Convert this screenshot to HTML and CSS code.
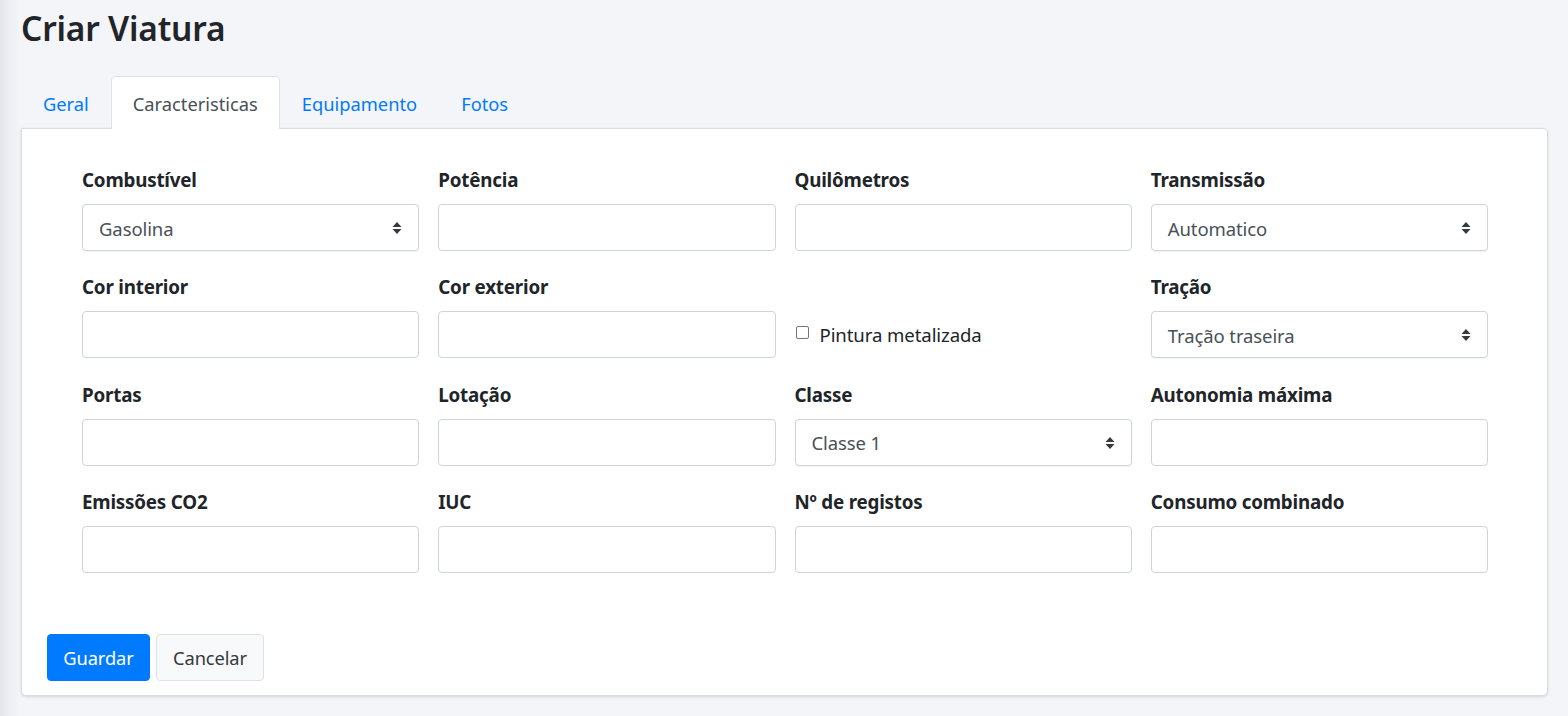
FILE: index.html
```html
<!DOCTYPE html>
<html lang="pt">
<head>
<meta charset="utf-8">
<title>Criar Viatura</title>
<link rel="stylesheet" href="styles.css">
</head>
<body>
<main class="page">
  <h1 class="title">Criar Viatura</h1>
  <ul class="tabs">
    <li><a class="tab">Geral</a></li>
    <li><a class="tab active">Caracteristicas</a></li>
    <li><a class="tab">Equipamento</a></li>
    <li><a class="tab">Fotos</a></li>
  </ul>
  <section class="card">
    <div class="grid">
      <div class="field">
        <label class="label">Combustível</label>
        <div class="select"><span>Gasolina</span><svg class="caret" width="10" height="14" viewBox="0 0 10 14"><path d="M5 1 L9.5 6 H0.5 Z M5 13 L9.5 8 H0.5 Z" fill="#343a40"/></svg></div>
      </div>
      <div class="field">
        <label class="label">Potência</label>
        <div class="input"></div>
      </div>
      <div class="field">
        <label class="label">Quilômetros</label>
        <div class="input"></div>
      </div>
      <div class="field">
        <label class="label">Transmissão</label>
        <div class="select"><span>Automatico</span><svg class="caret" width="10" height="14" viewBox="0 0 10 14"><path d="M5 1 L9.5 6 H0.5 Z M5 13 L9.5 8 H0.5 Z" fill="#343a40"/></svg></div>
      </div>

      <div class="field">
        <label class="label">Cor interior</label>
        <div class="input"></div>
      </div>
      <div class="field">
        <label class="label">Cor exterior</label>
        <div class="input"></div>
      </div>
      <div class="field">
        <span class="label empty">&nbsp;</span>
        <div class="check-row"><span class="checkbox"></span><span class="check-text">Pintura metalizada</span></div>
      </div>
      <div class="field">
        <label class="label">Tração</label>
        <div class="select"><span>Tração traseira</span><svg class="caret" width="10" height="14" viewBox="0 0 10 14"><path d="M5 1 L9.5 6 H0.5 Z M5 13 L9.5 8 H0.5 Z" fill="#343a40"/></svg></div>
      </div>

      <div class="field">
        <label class="label">Portas</label>
        <div class="input"></div>
      </div>
      <div class="field">
        <label class="label">Lotação</label>
        <div class="input"></div>
      </div>
      <div class="field">
        <label class="label">Classe</label>
        <div class="select"><span>Classe 1</span><svg class="caret" width="10" height="14" viewBox="0 0 10 14"><path d="M5 1 L9.5 6 H0.5 Z M5 13 L9.5 8 H0.5 Z" fill="#343a40"/></svg></div>
      </div>
      <div class="field">
        <label class="label">Autonomia máxima</label>
        <div class="input"></div>
      </div>

      <div class="field">
        <label class="label">Emissões CO2</label>
        <div class="input"></div>
      </div>
      <div class="field">
        <label class="label">IUC</label>
        <div class="input"></div>
      </div>
      <div class="field">
        <label class="label">Nº de registos</label>
        <div class="input"></div>
      </div>
      <div class="field">
        <label class="label">Consumo combinado</label>
        <div class="input"></div>
      </div>
    </div>
    <div class="actions">
      <button class="btn primary">Guardar</button>
      <button class="btn light">Cancelar</button>
    </div>
  </section>
</main>
</body>
</html>
```

FILE: styles.css
```css
* { box-sizing: border-box; }
html, body { margin: 0; padding: 0; }
body {
  font-family: "Noto Sans", "Open Sans", sans-serif;
  color: #212529;
  background: linear-gradient(to right, #e4e5ea 0, #eeeff3 10px, #f4f5f9 20px, #f4f5f9 100%);
  min-height: 716px;
}
.page {
  padding: 0 20px 0 21px;
}
.title {
  margin: 0;
  padding-top: 6px;
  height: 76px;
  font-size: 33.5px;
  font-weight: 600;
  line-height: 44px;
  letter-spacing: -0.2px;
}
.tabs {
  list-style: none;
  margin: 0;
  padding: 0;
  display: flex;
  height: 52px;
  position: relative;
  z-index: 1;
}
.tab {
  display: block;
  height: 53px;
  padding: 0 21px;
  line-height: 54px;
  font-size: 18.3px;
  color: #007bff;
  border: 1px solid transparent;
  border-bottom: none;
  border-radius: 5px 5px 0 0;
  cursor: pointer;
}
.tab.active {
  color: #495057;
  background: #fff;
  border-color: #dee2e6;
}
.card {
  background: #fff;
  border: 1px solid #dadde2;
  border-radius: 0 5px 5px 5px;
  box-shadow: 0 1px 3px rgba(0,0,0,0.12);
  height: 568px;
  display: flex;
  flex-direction: column;
}
.grid {
  display: grid;
  grid-template-columns: repeat(4, 1fr);
  column-gap: 19px;
  row-gap: 23.4px;
  padding: 38px 59px 0 60px;
}
.field {
  display: flex;
  flex-direction: column;
}
.label {
  display: block;
  font-size: 18.8px;
  font-weight: 700;
  line-height: 27px;
  height: 27px;
  margin-bottom: 10px;
  color: #212529;
  letter-spacing: -0.2px;
}
.input, .select {
  height: 47px;
  border: 1px solid #ced4da;
  border-radius: 4px;
  background: #fff;
}
.select {
  display: flex;
  align-items: center;
  justify-content: space-between;
  padding: 1px 16px 0 16px;
  font-size: 18.5px;
  color: #495057;
  box-shadow: 0 1px 2px rgba(0,0,0,0.06);
  letter-spacing: -0.1px;
}
.caret { margin-top: 0; }
.check-row {
  height: 47px;
  display: flex;
  align-items: center;
  padding-left: 1px;
}
.checkbox {
  width: 13px;
  height: 13px;
  border: 1px solid #767676;
  border-radius: 2px;
  margin-right: 11px;
  margin-top: -4px;
}
.check-text {
  font-size: 18.6px;
  color: #212529;
  letter-spacing: -0.1px;
}
.actions {
  margin-top: auto;
  padding: 0 0 14px 25px;
  display: flex;
  gap: 6px;
}
.btn {
  font-family: inherit;
  height: 47px;
  font-size: 18.3px;
  padding: 0 10px;
  border-radius: 4px;
  border: 1px solid transparent;
  cursor: pointer;
  letter-spacing: -0.1px;
}
.btn.primary {
  background: #007bff;
  color: #fff;
  border-color: #007bff;
  width: 103px;
}
.btn.light {
  background: #f8f9fa;
  color: #343a40;
  border-color: #dee2e6;
  width: 108px;
}
```
